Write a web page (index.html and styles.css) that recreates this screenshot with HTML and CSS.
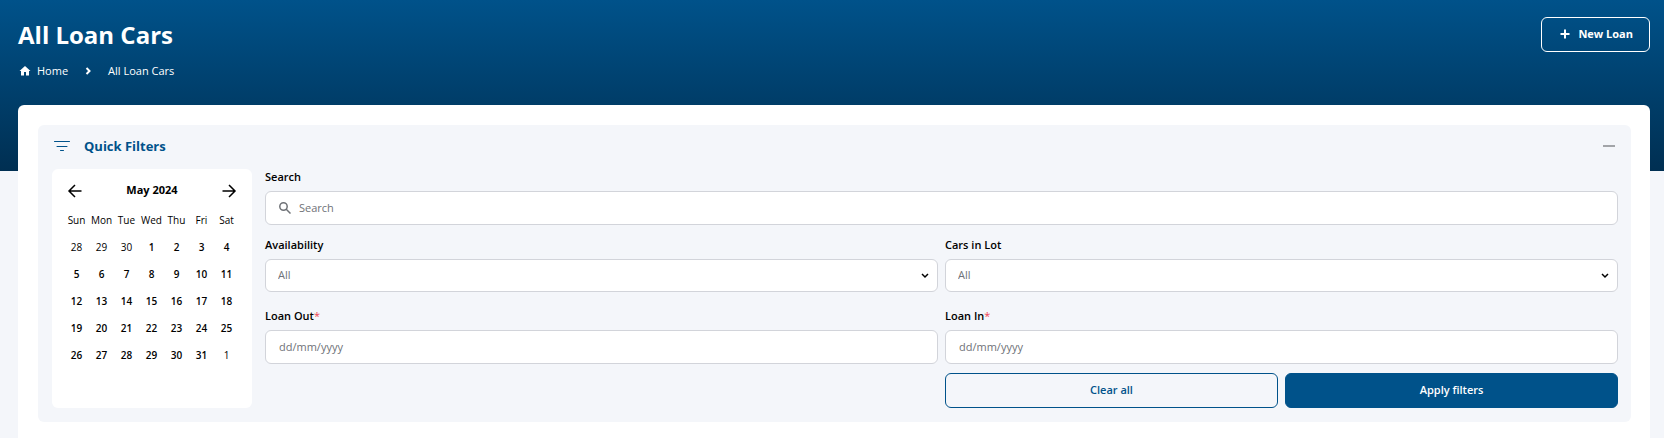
FILE: index.html
```html
<!DOCTYPE html>
<html lang="en">
<head>
<meta charset="utf-8">
<meta name="viewport" content="width=device-width, initial-scale=1">
<title>All Loan Cars</title>
<link rel="stylesheet" href="styles.css">
</head>
<body>
<div class="page">
  <header class="page-header">
    <div class="heading">
      <h1 class="title">All Loan Cars</h1>
      <nav class="breadcrumb" aria-label="Breadcrumb">
        <a class="crumb" href="#">
          <svg class="home-icon" viewBox="0 0 24 24" aria-hidden="true"><path d="M10 21v-7h4v7h6v-9h3L12 2 1 12h3v9z"/></svg>
          Home
        </a>
        <svg class="crumb-chevron" viewBox="0 0 8 8" aria-hidden="true"><path d="M2.500 1l3 3-3 3"/></svg>
        <span>All Loan Cars</span>
      </nav>
    </div>
    <button class="new-loan" type="button">
      <svg class="plus-icon" viewBox="0 0 10 10" aria-hidden="true"><path d="M5 .5v9M.5 5h9"/></svg>
      New Loan
    </button>
  </header>

  <main class="card">
    <section class="filters">
      <div class="filters-header">
        <svg class="filter-icon" viewBox="0 0 16 12" aria-hidden="true"><path d="M.5 1.500h15M3 6.500h10M6.500 10.500h3"/></svg>
        <h2 class="filters-title">Quick Filters</h2>
        <button class="collapse" type="button" aria-label="Collapse filters"></button>
      </div>
      <div class="filters-body">
        <div class="calendar">
          <div class="calendar-header">
            <button class="arrow" type="button" aria-label="Previous month"><svg class="arrow-icon" viewBox="0 0 14 14" aria-hidden="true"><path d="M13.500 8H1.500M7 2L1 8l6 6"/></svg></button>
            <strong class="month">May 2024</strong>
            <button class="arrow" type="button" aria-label="Next month"><svg class="arrow-icon" viewBox="0 0 14 14" aria-hidden="true"><path d="M.5 8h12M7 2l6 6-6 6"/></svg></button>
          </div>
          <table class="days">
            <thead><tr><th>Sun</th><th>Mon</th><th>Tue</th><th>Wed</th><th>Thu</th><th>Fri</th><th>Sat</th></tr></thead>
            <tbody>
              <tr><td class="outside">28</td><td class="outside">29</td><td class="outside">30</td><td>1</td><td>2</td><td>3</td><td>4</td></tr>
              <tr><td>5</td><td>6</td><td>7</td><td>8</td><td>9</td><td>10</td><td>11</td></tr>
              <tr><td>12</td><td>13</td><td>14</td><td>15</td><td>16</td><td>17</td><td>18</td></tr>
              <tr><td>19</td><td>20</td><td>21</td><td>22</td><td>23</td><td>24</td><td>25</td></tr>
              <tr><td>26</td><td>27</td><td>28</td><td>29</td><td>30</td><td>31</td><td class="outside">1</td></tr>
            </tbody>
          </table>
        </div>

        <form class="form">
          <div class="field field-wide">
            <label class="label" for="search">Search</label>
            <div class="control search-box">
              <svg class="search-icon" viewBox="0 0 12 12" aria-hidden="true"><circle cx="4.500" cy="4.500" r="3.700"/><path d="M7 7l4.500 4.500"/></svg>
              <input class="search-input" id="search" type="text" placeholder="Search">
            </div>
          </div>
          <div class="field">
            <label class="label" for="availability">Availability</label>
            <div class="select-wrap">
              <select class="control select" id="availability"><option>All</option></select>
              <svg class="select-chevron" viewBox="0 0 8 6" aria-hidden="true"><path d="M1 1l3 3 3-3"/></svg>
            </div>
          </div>
          <div class="field">
            <label class="label" for="cars">Cars in Lot</label>
            <div class="select-wrap">
              <select class="control select" id="cars"><option>All</option></select>
              <svg class="select-chevron" viewBox="0 0 8 6" aria-hidden="true"><path d="M1 1l3 3 3-3"/></svg>
            </div>
          </div>
          <div class="field field-date">
            <label class="label" for="loan-out">Loan Out<span class="required">*</span></label>
            <input class="control date" id="loan-out" type="text" placeholder="dd/mm/yyyy" required>
          </div>
          <div class="field field-date">
            <label class="label" for="loan-in">Loan In<span class="required">*</span></label>
            <input class="control date" id="loan-in" type="text" placeholder="dd/mm/yyyy" required>
          </div>
          <div class="actions">
            <button class="button button-outline" type="reset">Clear all</button>
            <button class="button button-solid" type="submit">Apply filters</button>
          </div>
        </form>
      </div>
    </section>
  </main>
</div>
</body>
</html>
```
FILE: styles.css
```css
* {
  box-sizing: border-box;
}

body {
  margin: 0;
  background: #f4f6fa;
  color: #000;
  font-family: "Open Sans", "Noto Sans", sans-serif;
  font-size: 11px;
  line-height: 16px;
}

button,
input,
select {
  font: inherit;
}

.page {
  display: flex;
  flex-direction: column;
  min-height: 100vh;
  padding: 0 14px 0 18px;
  background: linear-gradient(#00528a, #002f52) no-repeat 0 0 / 100% 171px;
}

.page-header {
  display: flex;
  justify-content: space-between;
  align-items: flex-start;
  height: 105px;
  padding-top: 17px;
  color: #fff;
}

.title {
  margin: 0;
  font-size: 24px;
  font-weight: 700;
  line-height: 36px;
}

.breadcrumb {
  display: flex;
  align-items: center;
  padding-top: 10px;
}

.crumb {
  display: flex;
  align-items: center;
  gap: 5px;
  color: inherit;
  text-decoration: none;
}

.home-icon {
  width: 14px;
  height: 12px;
  fill: currentColor;
}

.crumb-chevron {
  width: 8px;
  height: 8px;
  margin: 0 16px;
  fill: none;
  stroke: currentColor;
  stroke-width: 2;
}

.new-loan {
  display: flex;
  align-items: center;
  gap: 8px;
  height: 35px;
  padding: 0 16px 2px 18px;
  border: 1px solid #fff;
  border-radius: 6px;
  background: none;
  color: inherit;
  font-weight: 700;
}

.plus-icon {
  width: 10px;
  height: 10px;
  fill: none;
  stroke: currentColor;
  stroke-width: 2;
}

.card {
  flex: 1;
  padding: 20px 19px 16px 20px;
  border-radius: 6px 6px 0 0;
  background: #fff;
}

.filters {
  padding: 0 13px 14px 14px;
  border-radius: 6px;
  background: #f4f6fa;
}

.filters-header {
  display: flex;
  align-items: center;
  height: 44px;
  padding: 0 3px 2px 2px;
  color: #00528a;
}

.filter-icon {
  width: 16px;
  height: 12px;
  fill: none;
  stroke: currentColor;
  stroke-linecap: round;
}

.filters-title {
  flex: 1;
  margin: 0 0 0 14px;
  font-size: 13px;
  font-weight: 700;
}

.collapse {
  width: 12px;
  height: 2px;
  padding: 0;
  border: 0;
  background: #a2a4a8;
}

.filters-body {
  display: flex;
  gap: 13px;
}

.calendar {
  flex: none;
  width: 200px;
  padding: 11px 13px 12px 12px;
  border-radius: 6px;
  background: #fff;
}

.calendar-header {
  display: flex;
  justify-content: space-between;
  align-items: center;
  height: 20px;
  padding: 0 3px 0 4px;
}

.month {
  font-weight: 700;
}

.arrow {
  display: flex;
  padding: 0;
  border: 0;
  background: none;
}

.arrow-icon {
  width: 14px;
  height: 14px;
  overflow: visible;
  fill: none;
  stroke: #000;
  stroke-width: 1.500;
}

.days {
  width: 100%;
  margin-top: 6px;
  border-spacing: 0;
  table-layout: fixed;
  font-size: 10px;
  text-align: center;
}

.days th,
.days td {
  height: 27px;
  padding: 0;
  font-weight: 400;
}

.days td {
  font-weight: 600;
}

.days .outside {
  font-weight: 400;
}

.form {
  display: grid;
  flex: 1;
  grid-template-columns: 1fr 1fr;
  column-gap: 7px;
}

.field {
  display: flex;
  flex-direction: column;
  gap: 6px;
}

.field-wide {
  grid-column: 1 / -1;
  padding-bottom: 12px;
}

.field-date {
  padding-top: 16px;
}

.label {
  font-weight: 600;
}

.required {
  color: #f04452;
  font-weight: 400;
}

.control {
  width: 100%;
  height: 34px;
  padding: 0 12px;
  border: 1px solid #d2d4da;
  border-radius: 6px;
  background: #fff;
  color: #6f7277;
}

.search-box {
  display: flex;
  align-items: center;
  gap: 8px;
  padding-left: 13px;
}

.search-icon {
  width: 12px;
  height: 12px;
  fill: none;
  stroke: #6f7277;
  stroke-width: 1.500;
}

.search-input {
  flex: 1;
  padding: 0;
  border: 0;
  background: none;
}

.search-input::placeholder,
.date::placeholder {
  color: #6f7277;
}

.select-wrap {
  display: grid;
  align-items: center;
}

.select-wrap > * {
  grid-area: 1 / 1;
}

.select {
  height: 33px;
  padding-bottom: 2px;
  appearance: none;
}

.select-chevron {
  justify-self: end;
  width: 8px;
  height: 6px;
  margin-right: 9px;
  fill: none;
  stroke: #000;
  stroke-width: 1.500;
  pointer-events: none;
}

.date {
  padding: 0 13px 2px;
}

.actions {
  display: grid;
  grid-column: 2;
  grid-template-columns: 1fr 1fr;
  gap: 7px;
  padding-top: 9px;
}

.button {
  height: 35px;
  padding: 0 6px 2px;
  border: 1px solid #00528a;
  border-radius: 6px;
  font-weight: 600;
}

.button-outline {
  background: none;
  color: #00528a;
}

.button-solid {
  background: #00528a;
  color: #fff;
}
```
